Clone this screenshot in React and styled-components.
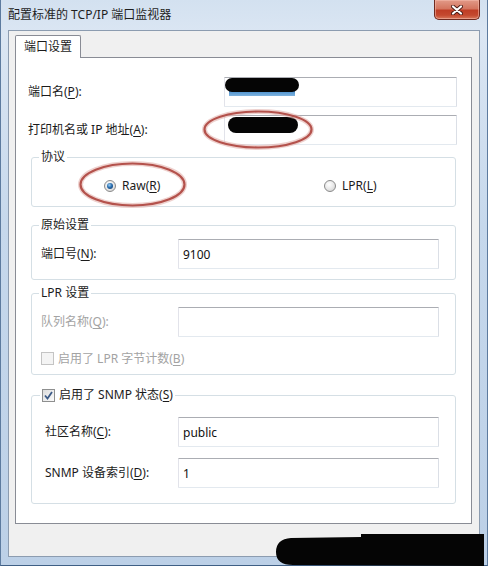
import React from "react";
import styled, { createGlobalStyle } from "styled-components";

const Global = createGlobalStyle`
  html, body { margin: 0; padding: 0; background: #fff; overflow: hidden; }
  * { box-sizing: border-box; }
`;

const FONT = `"Noto Sans", "Noto Sans CJK SC", sans-serif`;

const Window = styled.div`
  position: relative;
  width: 488px;
  height: 566px;
  display: flex;
  flex-direction: column;
  padding: 0 7px 8px 7px;
  background: linear-gradient(180deg, #d3e1f0 0%, #dbe6f3 6%, #c6d8ec 40%, #bcd0e7 100%);
  border-left: 1px solid #5d7b9f;
  border-right: 1px solid #5d7b9f;
  border-bottom: 1px solid #3f5f85;
  font-family: ${FONT};
  font-size: 12px;
  color: #1b1b1b;
`;

const TitleBar = styled.div`
  height: 30px;
  display: flex;
  align-items: flex-start;
  justify-content: space-between;
`;

const Title = styled.div`
  padding-top: 7px;
  font-size: 12px;
  line-height: 16px;
  color: #1e1e1e;
  white-space: pre;
`;

const CloseButton = styled.div`
  flex: none;
  width: 46px;
  height: 20px;
  border: 1px solid #6e2a20;
  border-top: 0;
  border-radius: 0 0 5px 5px;
  background-color: #c9553d;
  background-image: linear-gradient(180deg, #e29a88 0%, #d47660 45%, #bf3e26 55%, #c4492f 80%, #d8785c 100%);
  box-shadow: inset 0 0 0 1px rgba(245, 190, 175, 0.55);
  display: flex;
  align-items: center;
  justify-content: center;
`;

const Client = styled.div`
  flex: 1;
  display: flex;
  flex-direction: column;
  background: #f0f0f0;
  border: 1px solid #8c9cb0;
  padding: 4px 7px 0 6px;
`;

const TabStrip = styled.div`
  display: flex;
  position: relative;
  z-index: 1;
`;

const Tab = styled.div`
  height: 23px;
  margin-bottom: -1px;
  padding: 0 8px;
  border: 1px solid #898c95;
  border-bottom: none;
  border-radius: 2px 2px 0 0;
  background: #fff;
  line-height: 22px;
  font-size: 12px;
`;

const Panel = styled.div`
  position: relative;
  height: 467px;
  border: 1px solid #898c95;
  background: #fff;
  padding-top: 19px;
  display: flex;
  flex-direction: column;
`;

const TopRows = styled.div`
  display: grid;
  grid-template-columns: 196px 1fr;
  row-gap: 8px;
  padding: 0 14px 0 12px;
`;

const FieldGrid = styled.div`
  display: grid;
  grid-template-columns: ${(p) => p.$labelW}px 1fr;
  row-gap: ${(p) => p.$gap || 0}px;
  align-items: center;
`;

const Label = styled.div`
  font-size: 12px;
  line-height: 16px;
  color: ${(p) => (p.$disabled ? "#a3a3a3" : "#1b1b1b")};
  align-self: center;
  white-space: pre;
`;

const TextBox = styled.div`
  position: relative;
  height: 30px;
  border: 1px solid;
  border-color: #abadb3 #dbdfe6 #e3e9ef #e2e3ea;
  border-radius: 1px;
  background: #fff;
  padding: 0 4px;
  display: flex;
  align-items: center;
  font-size: 12px;
  color: #111;
`;

const Redact = styled.div`
  position: absolute;
  left: ${(p) => p.$x}px;
  top: ${(p) => p.$y}px;
  width: ${(p) => p.$w}px;
  height: ${(p) => p.$h}px;
  border-radius: 8px;
  background: #050505;
`;

const Selection = styled.div`
  position: absolute;
  left: 4px;
  top: 12px;
  width: 66px;
  height: 6px;
  background: linear-gradient(180deg, #3f87c9, #7fb3de);
`;

const Group = styled.fieldset`
  margin: ${(p) => p.$mt}px 15px 0 15px;
  min-width: 0;
  border: 1px solid #d5dfe5;
  border-radius: 3px;
  padding: ${(p) => p.$pt}px 16px ${(p) => p.$pb}px ${(p) => p.$pl}px;
  & > legend {
    margin-left: ${(p) => p.$lm - p.$pl}px;
  }
`;

const Legend = styled.legend`
  padding: 0 2px;
  font-size: 12px;
  line-height: 16px;
  height: 16px;
  display: flex;
  align-items: center;
  gap: 4px;
  white-space: pre;
  color: #1b1b1b;
`;

const RadioRow = styled.div`
  height: 41px;
  display: grid;
  grid-template-columns: 220px auto;
  align-items: center;
  padding-left: 63px;
`;

const RadioItem = styled.label`
  display: flex;
  align-items: center;
  gap: 6px;
  font-size: 12px;
  line-height: 16px;
`;

const RadioCircle = styled.span`
  width: 12px;
  height: 12px;
  border-radius: 50%;
  border: 1px solid #8a8a8a;
  background: radial-gradient(circle at 40% 35%, #ffffff 0%, #e6e6e6 55%, #c8c8c8 100%);
  display: flex;
  align-items: center;
  justify-content: center;
  &::after {
    content: "";
    display: ${(p) => (p.$checked ? "block" : "none")};
    width: 6px;
    height: 6px;
    border-radius: 50%;
    background: radial-gradient(circle at 40% 35%, #9fd0f5 0%, #2a6fb0 45%, #0d2f5c 100%);
  }
`;

const CheckRow = styled.div`
  height: 20px;
  margin-top: 11px;
  display: flex;
  align-items: center;
  gap: 4px;
  font-size: 12px;
  color: ${(p) => (p.$disabled ? "#a3a3a3" : "#1b1b1b")};
  white-space: pre;
`;

const CheckBox = styled.span`
  width: 13px;
  height: 13px;
  border: 1px solid ${(p) => (p.$disabled ? "#c4c4c4" : "#8e8f8f")};
  background: ${(p) =>
    p.$disabled ? "#f4f4f4" : "linear-gradient(135deg, #dcdcdc, #fbfbfb)"};
  display: flex;
  align-items: center;
  justify-content: center;
  flex: none;
`;

const Footer = styled.div`
  flex: 1;
`;

const Overlay = styled.svg`
  position: absolute;
  left: ${(p) => p.$x}px;
  top: ${(p) => p.$y}px;
  overflow: visible;
  pointer-events: none;
`;

const U = styled.u`
  text-decoration-thickness: 1px;
  text-underline-offset: 2px;
`;

function Ellipse({ x, y, w, h }) {
  return (
    <Overlay $x={x} $y={y} width={w} height={h}>
      <ellipse cx={w / 2} cy={h / 2} rx={w / 2 - 1.5} ry={h / 2 - 1.5} fill="none" stroke="#e3b3ad" strokeWidth="5" opacity="0.6" />
      <ellipse cx={w / 2} cy={h / 2} rx={w / 2 - 1.5} ry={h / 2 - 1.5} fill="none" stroke="#b4524c" strokeWidth="2.2" />
    </Overlay>
  );
}

export default function App() {
  return (
    <>
      <Global />
      <Window>
        <TitleBar>
          <Title>配置标准的 TCP/IP 端口监视器</Title>
          <CloseButton>
            <svg width="12" height="10" viewBox="0 0 12 10">
              <path d="M2 1.5 L10 8.5 M10 1.5 L2 8.5" stroke="#4a1c16" strokeWidth="4" strokeLinecap="round" />
              <path d="M2 1.5 L10 8.5 M10 1.5 L2 8.5" stroke="#ffffff" strokeWidth="2.2" strokeLinecap="round" />
            </svg>
          </CloseButton>
        </TitleBar>
        <Client>
          <TabStrip>
            <Tab>端口设置</Tab>
          </TabStrip>
          <Panel>
            <TopRows>
              <Label>端口名(<U>P</U>):</Label>
              <TextBox>
                <Selection />
                <Redact $x={0} $y={0} $w={74} $h={14} />
              </TextBox>
              <Label>打印机名或 IP 地址(<U>A</U>):</Label>
              <TextBox>
                <Redact $x={3} $y={1} $w={70} $h={16} />
              </TextBox>
            </TopRows>

            <Group $mt={4} $pt={0} $pb={0} $pl={9} $lm={7}>
              <Legend>协议</Legend>
              <RadioRow>
                <RadioItem>
                  <RadioCircle $checked />
                  <span>Raw(<U>R</U>)</span>
                </RadioItem>
                <RadioItem>
                  <RadioCircle />
                  <span>LPR(<U>L</U>)</span>
                </RadioItem>
              </RadioRow>
            </Group>

            <Group $mt={10} $pt={6} $pb={10} $pl={9} $lm={7}>
              <Legend>原始设置</Legend>
              <FieldGrid $labelW={137}>
                <Label>端口号(<U>N</U>):</Label>
                <TextBox>9100</TextBox>
              </FieldGrid>
            </Group>

            <Group $mt={5} $pt={6} $pb={6} $pl={9} $lm={7}>
              <Legend>LPR 设置</Legend>
              <FieldGrid $labelW={137}>
                <Label $disabled>队列名称(<U>Q</U>):</Label>
                <TextBox />
              </FieldGrid>
              <CheckRow $disabled>
                <CheckBox $disabled />
                <span>启用了 LPR 字节计数(<U>B</U>)</span>
              </CheckRow>
            </Group>

            <Group $mt={12} $pt={14} $pb={15} $pl={13} $lm={8}>
              <Legend>
                <CheckBox>
                  <svg width="9" height="9" viewBox="0 0 9 9">
                    <path d="M1 4.5 L3.5 7.5 L8 1" fill="none" stroke="#3c5a86" strokeWidth="1.8" />
                  </svg>
                </CheckBox>
                <span>启用了 SNMP 状态(<U>S</U>)</span>
              </Legend>
              <FieldGrid $labelW={133} $gap={11}>
                <Label>社区名称(<U>C</U>):</Label>
                <TextBox>public</TextBox>
                <Label>SNMP 设备索引(<U>D</U>):</Label>
                <TextBox>1</TextBox>
              </FieldGrid>
            </Group>

            <Ellipse x={63} y={104} w={107} h={45} />
            <Ellipse x={187} y={52} w={110} h={39} />
          </Panel>
          <Footer />
        </Client>
        <Overlay $x={274} $y={534} width={209} height={32}>
          <path d="M16 4 Q1 5 1 18 Q1 31 18 31 L209 32 L209 0 L86 0 L86 3 Z" fill="#050505" />
        </Overlay>
      </Window>
    </>
  );
}
